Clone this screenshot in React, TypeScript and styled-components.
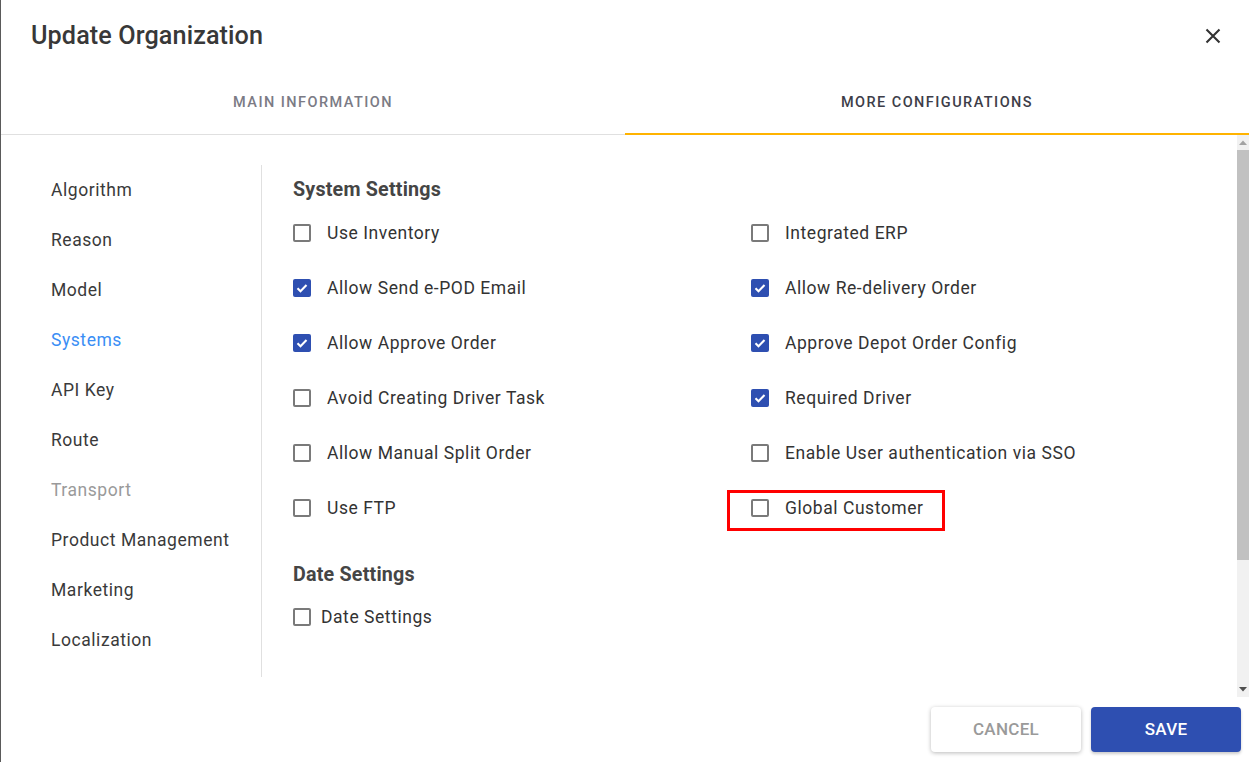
import React from "react";
import styled, { createGlobalStyle, css } from "styled-components";

const Global = createGlobalStyle`
  html, body { margin: 0; padding: 0; }
  body {
    background: #5a5a5a;
    font-family: Roboto, "Noto Sans", "Liberation Sans", sans-serif;
    overflow: hidden;
  }
  * { box-sizing: border-box; }
`;

const Dialog = styled.div`
  margin-left: 1px;
  height: 762px;
  background: #fff;
  display: flex;
  flex-direction: column;
`;

const Header = styled.div`
  height: 75px;
  display: flex;
  align-items: center;
  justify-content: space-between;
  padding: 0 26px 4px 30px;
`;

const Title = styled.h2`
  margin: 0;
  font-size: 25.2px;
  font-weight: 500;
  color: #383838;
  letter-spacing: 0.1px;
`;

const CloseButton = styled.button`
  border: none;
  background: transparent;
  padding: 0;
  width: 20px;
  height: 20px;
  display: flex;
  align-items: center;
  justify-content: center;
  cursor: pointer;
`;

const TabBar = styled.div`
  height: 60px;
  display: grid;
  grid-template-columns: 1fr 1fr;
  border-bottom: 1px solid #e0e0e0;
`;

const Tab = styled.div<{ $active?: boolean }>`
  display: flex;
  align-items: center;
  justify-content: center;
  font-size: 14.5px;
  font-weight: 500;
  letter-spacing: 1.45px;
  text-transform: uppercase;
  padding-bottom: 3px;
  color: ${(p) => (p.$active ? "#3d3d48" : "#7b7b85")};
  border-bottom: 2px solid ${(p) => (p.$active ? "#ffb300" : "transparent")};
  margin-bottom: -1px;
`;

const ScrollArea = styled.div`
  height: 562px;
  display: flex;
  overflow: hidden;
`;

const Viewport = styled.div`
  flex: 1;
  overflow: hidden;
`;

const Track = styled.div`
  width: 12px;
  flex-shrink: 0;
  background: #f1f1f1;
  display: flex;
  flex-direction: column;
`;

const Arrow = styled.div`
  height: 15px;
  display: flex;
  align-items: center;
  justify-content: center;
`;

const ThumbLane = styled.div`
  flex: 1;
  display: flex;
  flex-direction: column;
`;

const Thumb = styled.div`
  height: 410px;
  background: #c1c1c1;
`;

const Body = styled.div`
  display: flex;
  padding: 30px 0 0;
`;

const Sidebar = styled.nav`
  width: 261px;
  flex-shrink: 0;
  border-right: 1px solid #e0e0e0;
  padding: 0 0 12px 50px;
  display: flex;
  flex-direction: column;
`;

const NavItem = styled.div<{ $state?: "active" | "disabled" }>`
  height: 50px;
  display: flex;
  align-items: center;
  font-size: 17.5px;
  letter-spacing: 0.55px;
  color: ${(p) =>
    p.$state === "active" ? "#3a8ef5" : p.$state === "disabled" ? "#9a9a9a" : "#3a3a3a"};
`;

const Main = styled.div`
  flex: 1;
  padding: 12px 0 0 31px;
`;

const SectionTitle = styled.h3`
  margin: 0;
  height: 25px;
  line-height: 25px;
  font-size: 19.7px;
  font-weight: 700;
  color: #454545;
  letter-spacing: 0.2px;
`;

const Grid = styled.div`
  display: grid;
  grid-template-columns: 458px 458px;
  grid-auto-rows: 55px;
  margin-top: 3px;
  margin-bottom: 27px;
`;

const Cell = styled.div`
  display: flex;
  align-items: center;
`;

const Item = styled.label<{ $highlight?: boolean; $compact?: boolean }>`
  position: relative;
  display: inline-flex;
  align-items: center;
  gap: ${(p) => (p.$compact ? "10px" : "16px")};
  font-size: 17.5px;
  letter-spacing: 0.55px;
  color: #333;
  line-height: 20px;
  ${(p) =>
    p.$highlight &&
    css`
      &::after {
        content: "";
        position: absolute;
        left: -24px;
        right: -21px;
        top: -8px;
        bottom: -13px;
        border: 3px solid #f00;
      }
    `}
`;

const Box = styled.span<{ $checked?: boolean }>`
  width: 18px;
  height: 18px;
  border-radius: 2px;
  flex-shrink: 0;
  display: flex;
  align-items: center;
  justify-content: center;
  ${(p) =>
    p.$checked
      ? css`
          background: #2e4fb1;
        `
      : css`
          border: 2px solid #7a7a7a;
        `}
`;

const DateRow = styled.div`
  height: 40px;
  display: flex;
  align-items: center;
  margin-top: 10px;
`;

const Footer = styled.div`
  flex: 1;
  display: flex;
  justify-content: flex-end;
  align-items: flex-start;
  gap: 10px;
  padding: 10px 8px 0 0;
`;

const Button = styled.button<{ $primary?: boolean }>`
  width: 150px;
  height: 45px;
  border: none;
  border-radius: 4px;
  font-family: inherit;
  font-size: 17px;
  font-weight: 500;
  letter-spacing: 0.3px;
  padding: 0 0 2px;
  cursor: pointer;
  ${(p) =>
    p.$primary
      ? css`
          background: #2e4fb1;
          color: #fff;
          box-shadow: 0 2px 3px rgba(0, 0, 0, 0.2);
        `
      : css`
          background: #fff;
          color: #9a9a9a;
          box-shadow: 0 1px 4px rgba(0, 0, 0, 0.28);
        `}
`;

const Checkbox: React.FC<{
  label: string;
  checked?: boolean;
  highlight?: boolean;
  compact?: boolean;
}> = ({ label, checked, highlight, compact }) => (
  <Item $highlight={highlight} $compact={compact}>
    <Box $checked={checked}>
      {checked && (
        <svg width="14" height="14" viewBox="0 0 14 14">
          <path d="M2.5 7.2l3 3 6-6.1" fill="none" stroke="#fff" strokeWidth="2.1" />
        </svg>
      )}
    </Box>
    {label}
  </Item>
);

const navItems: { label: string; state?: "active" | "disabled" }[] = [
  { label: "Algorithm" },
  { label: "Reason" },
  { label: "Model" },
  { label: "Systems", state: "active" },
  { label: "API Key" },
  { label: "Route" },
  { label: "Transport", state: "disabled" },
  { label: "Product Management" },
  { label: "Marketing" },
  { label: "Localization" },
];

const settings: { label: string; checked?: boolean; highlight?: boolean }[] = [
  { label: "Use Inventory" },
  { label: "Integrated ERP" },
  { label: "Allow Send e-POD Email", checked: true },
  { label: "Allow Re-delivery Order", checked: true },
  { label: "Allow Approve Order", checked: true },
  { label: "Approve Depot Order Config", checked: true },
  { label: "Avoid Creating Driver Task" },
  { label: "Required Driver", checked: true },
  { label: "Allow Manual Split Order" },
  { label: "Enable User authentication via SSO" },
  { label: "Use FTP" },
  { label: "Global Customer", highlight: true },
];

export default function App() {
  return (
    <>
      <Global />
      <Dialog>
        <Header>
          <Title>Update Organization</Title>
          <CloseButton aria-label="close">
            <svg width="16" height="16" viewBox="0 0 16 16">
              <path d="M1.5 1.5l13 13M14.5 1.5l-13 13" stroke="#333" strokeWidth="2.1" />
            </svg>
          </CloseButton>
        </Header>
        <TabBar>
          <Tab>Main Information</Tab>
          <Tab $active>More Configurations</Tab>
        </TabBar>
        <ScrollArea>
          <Viewport>
            <Body>
              <Sidebar>
                {navItems.map((n) => (
                  <NavItem key={n.label} $state={n.state}>
                    {n.label}
                  </NavItem>
                ))}
              </Sidebar>
              <Main>
                <SectionTitle>System Settings</SectionTitle>
                <Grid>
                  {settings.map((s) => (
                    <Cell key={s.label}>
                      <Checkbox label={s.label} checked={s.checked} highlight={s.highlight} />
                    </Cell>
                  ))}
                </Grid>
                <SectionTitle>Date Settings</SectionTitle>
                <DateRow>
                  <Checkbox label="Date Settings" compact />
                </DateRow>
              </Main>
            </Body>
          </Viewport>
          <Track>
            <Arrow>
              <svg width="8" height="5" viewBox="0 0 8 5">
                <path d="M0 5L4 0.5L8 5Z" fill="#a3a3a3" />
              </svg>
            </Arrow>
            <ThumbLane>
              <Thumb />
            </ThumbLane>
            <Arrow>
              <svg width="8" height="5" viewBox="0 0 8 5">
                <path d="M0 0L4 4.5L8 0Z" fill="#505050" />
              </svg>
            </Arrow>
          </Track>
        </ScrollArea>
        <Footer>
          <Button>CANCEL</Button>
          <Button $primary>SAVE</Button>
        </Footer>
      </Dialog>
    </>
  );
}
